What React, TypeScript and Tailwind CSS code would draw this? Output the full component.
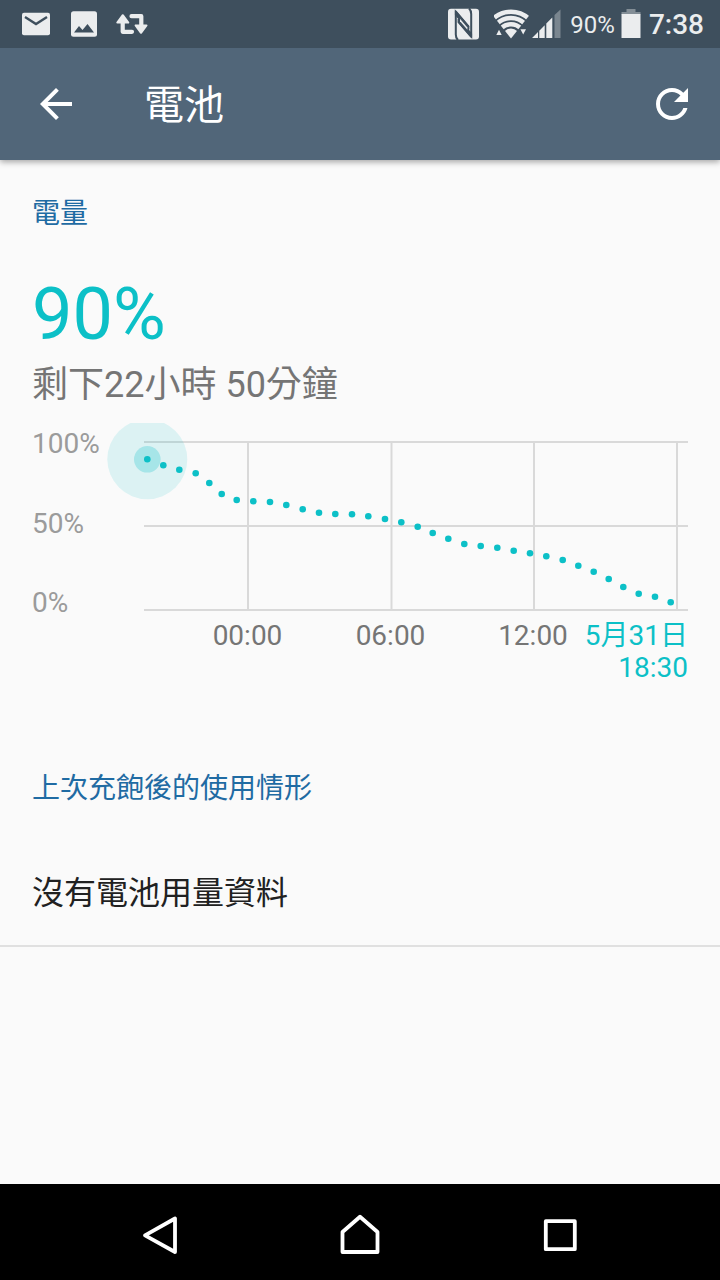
import React from "react";

const DOTS: [number, number][] = [
  [47.3, 36.3], [63.3, 42.3], [79.3, 46.7], [95.7, 50.3], [109.3, 60], [121.7, 71],
  [136.7, 77], [153.3, 78.3], [170, 79], [186.3, 82], [202.7, 86.3], [219, 89.7],
  [235.3, 91], [252, 91.3], [268.3, 93.3], [285, 96], [301.3, 99.3], [317.7, 103.7],
  [332.7, 110], [348.3, 115.7], [364.3, 121], [380.7, 123], [397.3, 124.7],
  [413.7, 127.7], [430, 130.3], [446.3, 133.3], [462.7, 137], [478.3, 142.7],
  [493.7, 148.7], [508.7, 156], [523.3, 164], [538.7, 170.7], [555, 173.7], [570.7, 179.3],
];

function StatusBar() {
  return (
    <div className="relative z-10 flex h-12 items-center justify-between bg-[#3e4f5d] pl-5 pr-4 text-[#ebedee]">
      <div className="flex items-center gap-4">
        <svg className="size-8" viewBox="0 0 32 32" fill="currentColor" aria-hidden="true">
          <rect x="2" y="4.7" width="28" height="22.6" rx="2" />
          <path d="M5 9L16 16L27 9" fill="none" stroke="#3e4f5d" strokeWidth="2.4" />
        </svg>
        <svg className="size-8" viewBox="0 0 32 32" fill="currentColor" aria-hidden="true">
          <rect x="3" y="3.2" width="26" height="25.6" rx="2.5" />
          <path d="M6 24.5L11 18L14.5 22L19.5 16L26 24.5Z" fill="#3e4f5d" />
        </svg>
        <svg className="size-8" viewBox="0 0 32 32" aria-hidden="true">
          <g fill="none" stroke="currentColor" strokeWidth="4.2" strokeLinejoin="round" strokeLinecap="round">
            <path d="M6.7 13V23.8H16" />
            <path d="M15.5 8.2H25.3V18" />
          </g>
          <g fill="currentColor" stroke="currentColor" strokeWidth="2" strokeLinejoin="round">
            <path d="M6.8 7.2L12.3 14.6H1.3Z" />
            <path d="M25 24.8L19.6 17.4H30.5Z" />
          </g>
        </svg>
      </div>
      <div className="flex items-center">
        <svg className="mr-3 h-8 w-9" viewBox="0 0 36 32" aria-hidden="true">
          <rect x="2" y="0.8" width="31" height="30.8" rx="3" fill="currentColor" />
          <g fill="none" stroke="#3e4f5d" strokeWidth="2">
            <path d="M12 32Q9.8 30 9.8 26.5V4L22.6 19" />
            <path d="M23 0.4Q25.2 2.4 25.2 5.9V28.4L12.4 13.4" />
          </g>
          <path d="M8.9 2.8V7L21 21.5H23.4V18L10.5 2.8Z M26.1 29.6V25.4L14 10.9H11.6V14.4L24.5 29.6Z" fill="#3e4f5d" />
          <path d="M14 13.2L21.4 21.8V19.4L14 10.8Z" fill="currentColor" />
        </svg>
        <svg className="h-8 w-9" viewBox="0 0 36 32" aria-hidden="true">
          <clipPath id="wifi-wedge">
            <path d="M17 30.5L-3.5 4.5L4 -2H30L37.5 4.5Z" />
          </clipPath>
          <g clipPath="url(#wifi-wedge)" fill="none" stroke="currentColor" strokeWidth="4.6">
            <circle cx="17" cy="30" r="26.2" />
            <circle cx="17" cy="30" r="20" />
            <circle cx="17" cy="30" r="13.8" />
            <circle cx="17" cy="29" r="8.6" fill="currentColor" stroke="none" />
          </g>
          <path d="M2.3 27L5 21.8L7.7 27Z M26.4 21.3H32L29.2 26.5Z" fill="currentColor" />
        </svg>
        <svg className="h-8 w-9" viewBox="0 0 36 32" fill="currentColor" aria-hidden="true">
          <path d="M2 30L8 24V30Z M9.3 22.7L14.7 17.3V30H9.3Z M16.3 15.5L22.3 9.5V30H16.3Z" />
          <path d="M24.5 7L30.5 1.5V30H24.5Z" opacity="0.35" />
        </svg>
        <span className="mr-1.5 ml-1 pt-0.5 text-2xl">90%</span>
        <svg className="mr-2 h-8 w-5" viewBox="0 0 20 32" fill="currentColor" aria-hidden="true">
          <path d="M5.5 1H14.5V4H19.5V6.5H0.5V4H5.5Z" opacity="0.4" />
          <path d="M0.5 6H19.5V30H0.5Z" />
        </svg>
        <time className="pt-0.5 text-[28px] leading-8 font-medium">7:38</time>
      </div>
    </div>
  );
}

function AppBar() {
  return (
    <header className="relative flex h-28 items-center bg-[#516679] px-8 pr-6 text-white shadow-[0_2px_6px_rgba(0,0,0,0.35)]">
      <button type="button" aria-label="返回" className="size-12">
        <svg className="size-12" viewBox="0 0 24 24" fill="currentColor">
          <path d="M20 11H7.83l5.59-5.59L12 4l-8 8 8 8 1.41-1.41L7.83 13H20v-2z" />
        </svg>
      </button>
      <h1 className="ml-16 flex-1 pt-1 text-[40px] leading-12">電池</h1>
      <button type="button" aria-label="重新整理" className="size-12">
        <svg className="size-12" viewBox="0 0 24 24" fill="currentColor">
          <path d="M17.65 6.35C16.2 4.9 14.21 4 12 4c-4.42 0-7.99 3.58-7.99 8s3.57 8 7.99 8c3.73 0 6.84-2.55 7.73-6h-2.08c-.82 2.33-3.04 4-5.65 4-3.31 0-6-2.69-6-6s2.69-6 6-6c1.66 0 3.14.69 4.22 1.78L13 11h7V4l-2.35 2.35z" />
        </svg>
      </button>
    </header>
  );
}

function BatteryChart() {
  return (
    <div className="mt-3.5 grid grid-cols-[68px_minmax(0,1fr)] text-[28px] leading-8">
      <div className="flex flex-col justify-between pt-[5px] pb-px text-[#9b9b9b]">
        <span>100%</span>
        <span>50%</span>
        <span>0%</span>
      </div>
      <svg className="h-auto w-full" viewBox="0 0 588 197" aria-hidden="true">
        <path
          d="M44 19H588M44 103H588M44 187H588M148 18V188M291.5 18V188M434 18V188M577 18V188"
          stroke="#000"
          strokeOpacity="0.13"
          strokeWidth="2"
          fill="none"
        />
        <g fill="#0cc0c7">
          <circle cx="47.3" cy="36.3" r="40" opacity="0.12" />
          <circle cx="47.3" cy="36.3" r="13.3" opacity="0.26" />
          {DOTS.map(([x, y]) => (
            <circle key={x} cx={x} cy={y} r="3.3" />
          ))}
        </g>
      </svg>
      <div className="col-start-2 grid grid-cols-[minmax(0,76fr)_minmax(0,143fr)_minmax(0,143fr)_minmax(0,142fr)_minmax(0,84fr)] text-center text-[#757575]">
        <span className="col-start-2">00:00</span>
        <span>06:00</span>
        <span>12:00</span>
        <span className="flex flex-col items-end whitespace-nowrap text-[#0cc0c7]">
          <span>5月31日</span>
          <span>18:30</span>
        </span>
      </div>
    </div>
  );
}

function NavBar() {
  return (
    <nav className="flex h-24 items-center justify-around bg-black px-15 text-white">
      <button type="button" aria-label="返回" className="size-12">
        <svg className="size-12" viewBox="0 0 48 48" fill="none" stroke="currentColor" strokeWidth="3.8" strokeLinejoin="round">
          <path d="M9 27.3L39 10.5V44Z" />
        </svg>
      </button>
      <button type="button" aria-label="主畫面" className="size-12">
        <svg className="size-12" viewBox="0 0 48 48" fill="none" stroke="currentColor" strokeWidth="3.8" strokeLinejoin="round">
          <path d="M24 8.8L41.5 24V44H6.5V24Z" />
        </svg>
      </button>
      <button type="button" aria-label="最近使用的應用程式" className="size-12">
        <svg className="size-12" viewBox="0 0 48 48" fill="none" stroke="currentColor" strokeWidth="3.8" strokeLinejoin="round">
          <rect x="9.8" y="13.2" width="29" height="28" />
        </svg>
      </button>
    </nav>
  );
}

export default function App() {
  return (
    <div className="flex min-h-screen flex-col bg-[#fafafa] font-['Roboto','Noto_Sans_CJK_TC',sans-serif]" lang="zh-Hant">
      <StatusBar />
      <AppBar />
      <main className="flex-1">
        <section className="px-8 pt-9.5">
          <h2 className="text-[28px] leading-8 text-[#1f6ba3]">電量</h2>
          <p className="mt-[45px] text-7xl leading-20 text-[#0cc0c7]">90%</p>
          <p className="mt-1.5 text-4xl leading-12 text-[#757575]">剩下22小時 50分鐘</p>
          <BatteryChart />
        </section>
        <section className="mt-[89px] border-b-2 border-[#e0e0e0] px-8 pb-7">
          <h2 className="text-[28px] leading-8 text-[#1f6ba3]">上次充飽後的使用情形</h2>
          <p className="mt-16 text-[32px] leading-12 text-[#212121]">沒有電池用量資料</p>
        </section>
      </main>
      <NavBar />
    </div>
  );
}
